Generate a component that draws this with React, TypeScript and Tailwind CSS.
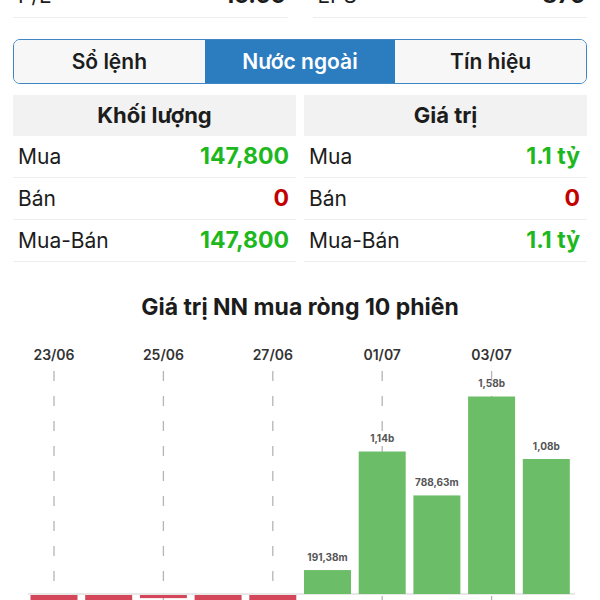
import React, { useState } from 'react';

const bars = [
  { date: '23/06', value: -0.06 },
  { date: '24/06', value: -0.06 },
  { date: '25/06', value: -0.025 },
  { date: '26/06', value: -0.06 },
  { date: '27/06', value: -0.06 },
  { date: '30/06', value: 0.19138, label: '191,38m' },
  { date: '01/07', value: 1.14, label: '1,14b' },
  { date: '02/07', value: 0.78863, label: '788,63m' },
  { date: '03/07', value: 1.58, label: '1,58b' },
  { date: '04/07', value: 1.08, label: '1,08b' },
];

const tabs = ['Sổ lệnh', 'Nước ngoài', 'Tín hiệu'];

const StatTable = ({ title, rows }: { title: string; rows: { label: string; value: string; color: string }[] }) => (
  <div>
    <div className="h-[41px] bg-[#f2f2f2] flex items-center justify-center text-[22px] font-bold text-[#1c1c1c]">{title}</div>
    {rows.map((r) => (
      <div key={r.label} className="h-[42px] border-b border-[#ededed] flex items-center justify-between pl-[5px] pr-[7px]">
        <span className="text-[21px] text-[#1c1c1c]">{r.label}</span>
        <span className={`text-[23px] font-bold ${r.color}`}>{r.value}</span>
      </div>
    ))}
  </div>
);

const NetBuyChart = () => {
  // y coords are relative to the svg top (page y 326)
  const baseY = 269;
  const scale = 125;
  const pitch = 54.7;
  const firstCenter = 54;
  const barW = 47;

  return (
    <svg width="600" height="280" viewBox="0 0 600 280" className="block">
      {bars.map((b, i) =>
        i % 2 === 0 ? (
          <g key={b.date}>
            <text x={firstCenter + pitch * i} y={31} textAnchor="middle" dominantBaseline="middle" fontSize="14" fontWeight="600" fill="#333">
              {b.date}
            </text>
            <line x1={firstCenter + pitch * i} x2={firstCenter + pitch * i} y1={46} y2={280} stroke="#b5b5b5" strokeWidth="1.3" strokeDasharray="10 15" />
          </g>
        ) : null
      )}
      <line x1={28} x2={575} y1={baseY} y2={baseY} stroke="#d0d0d0" strokeWidth="1" />
      {bars.map((b, i) => {
        const cx = firstCenter + pitch * i;
        const h = Math.abs(b.value) * scale;
        if (b.value < 0) {
          return <rect key={b.date} x={cx - barW / 2} y={baseY + 1} width={barW} height={h} fill="#d4475a" />;
        }
        return (
          <g key={b.date}>
            <rect x={cx - barW / 2} y={baseY - h} width={barW} height={h} fill="#6cbd67" />
            <text x={cx} y={baseY - h - 12} textAnchor="middle" dominantBaseline="middle" fontSize="10" fontWeight="700" fill="#555">
              {b.label}
            </text>
          </g>
        );
      })}
    </svg>
  );
};

export default function App() {
  const [active, setActive] = useState(1);

  return (
    <div className="w-[600px] h-[600px] overflow-hidden bg-white font-['Inter','Noto_Sans',sans-serif]">
      <div className="px-[13px]">
        <div className="-mt-[26px] grid grid-cols-2 gap-[25px]">
          <div className="h-[44px] border-b border-[#ededed] flex items-center justify-between pl-[5px] pr-[2px]">
            <span className="text-[21px] text-[#1c1c1c]">P/E</span>
            <span className="text-[23px] font-bold text-[#1c1c1c]">16.56</span>
          </div>
          <div className="h-[44px] border-b border-[#ededed] flex items-center justify-between pl-[5px] pr-[2px]">
            <span className="text-[21px] text-[#1c1c1c]">EPS</span>
            <span className="text-[23px] font-bold text-[#1c1c1c]">875</span>
          </div>
        </div>

        <div className="mt-[21px] h-[45px] border-[1.5px] border-[#3f86c4] rounded-[7px] overflow-hidden grid grid-cols-3">
          {tabs.map((t, i) => (
            <button
              key={t}
              onClick={() => setActive(i)}
              className={
                i === active
                  ? 'bg-[#2c7dbf] text-white text-[21px] font-semibold'
                  : 'bg-[#f7f7f7] text-[#1c1c1c] text-[21px] font-semibold'
              }
            >
              {t}
            </button>
          ))}
        </div>

        <div className="mt-[11px] grid grid-cols-2 gap-[8px]">
          <StatTable
            title="Khối lượng"
            rows={[
              { label: 'Mua', value: '147,800', color: 'text-[#1db81d]' },
              { label: 'Bán', value: '0', color: 'text-[#c20000]' },
              { label: 'Mua-Bán', value: '147,800', color: 'text-[#1db81d]' },
            ]}
          />
          <StatTable
            title="Giá trị"
            rows={[
              { label: 'Mua', value: '1.1 tỷ', color: 'text-[#1db81d]' },
              { label: 'Bán', value: '0', color: 'text-[#c20000]' },
              { label: 'Mua-Bán', value: '1.1 tỷ', color: 'text-[#1db81d]' },
            ]}
          />
        </div>
      </div>

      <div className="mt-[27px] h-[36px] flex items-center justify-center text-[23px] font-bold text-[#1c1c1c]">
        Giá trị NN mua ròng 10 phiên
      </div>
      <NetBuyChart />
    </div>
  );
}
